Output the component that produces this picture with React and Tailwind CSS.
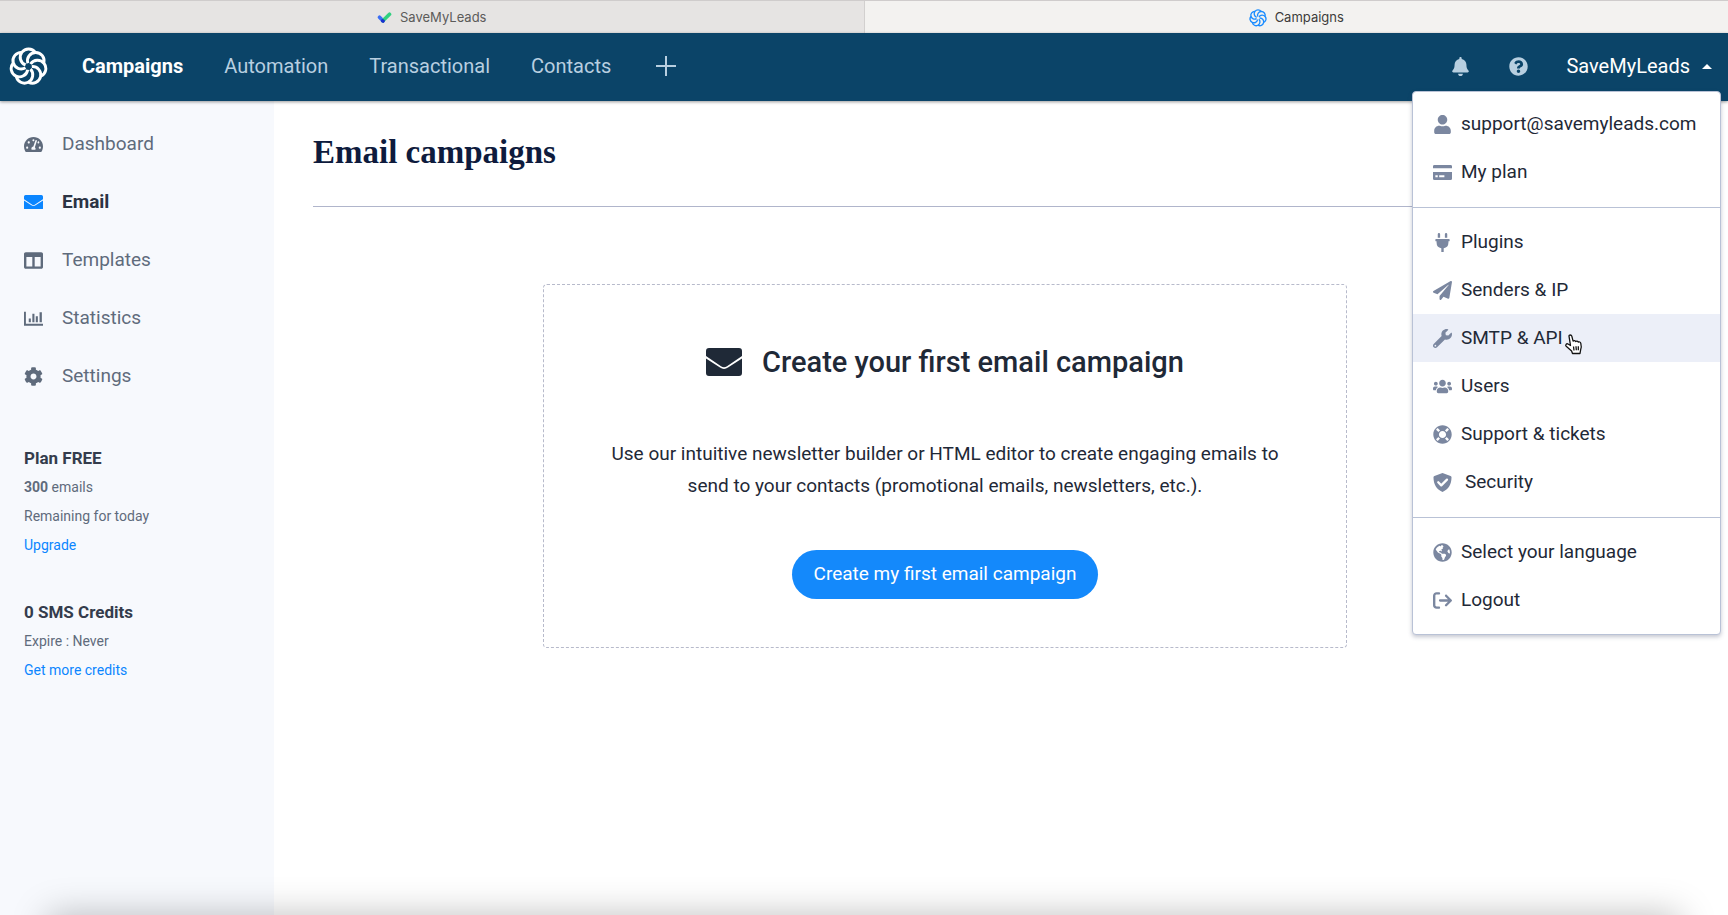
import {
  FaBell,
  FaCog,
  FaColumns,
  FaGlobeAmericas,
  FaLifeRing,
  FaPaperPlane,
  FaPlug,
  FaQuestionCircle,
  FaTachometerAlt,
  FaUser,
  FaUsers,
  FaWrench,
} from "react-icons/fa";
import { FaArrowRightFromBracket } from "react-icons/fa6";

const PETALS = [0, 1, 2, 3, 4, 5, 6];

function PinwheelLogo({ className }) {
  return (
    <svg viewBox="-20 -20 40 40" fill="none" stroke="currentColor" strokeWidth="3" className={className} aria-hidden="true">
      {PETALS.map((n) => (
        <path key={n} d="M6.94 -14.42A8.5 8.5 0 1 0 -3 -1.55" transform={`rotate(${(n * 360) / 7})`} />
      ))}
    </svg>
  );
}

function CheckLogo({ className }) {
  return (
    <svg viewBox="0 0 14 12" fill="none" strokeWidth="3.6" strokeLinecap="round" className={className} aria-hidden="true">
      <path d="M2 5.2L5.2 8.6" stroke="#3b6ef5" />
      <path d="M5.4 8.8L12 2.2" stroke="#2fd07f" />
      <path d="M5.2 8.8L5.6 9" stroke="#1a2fd0" />
    </svg>
  );
}

function EnvelopeIcon({ className }) {
  return (
    <svg viewBox="0 0 36 28" fill="currentColor" className={className} aria-hidden="true">
      <path d="M3 0h30a3 3 0 0 1 3 3v5L21 18.2a5 5 0 0 1-6 0L0 8V3a3 3 0 0 1 3-3z" />
      <path d="M0 10.4l14 9.2a7 7 0 0 0 8 0l14-9.2V25a3 3 0 0 1-3 3H3a3 3 0 0 1-3-3z" />
    </svg>
  );
}

function StatsIcon({ className }) {
  return (
    <svg viewBox="0 0 20 20" fill="currentColor" className={className} aria-hidden="true">
      <path d="M0 3h2v12.5h18v2H0zM5 10h2.2v4H5zM8.8 5H11v9H8.8zM12.4 7.5h2.2V14h-2.2zM16.4 3.5h2.4V14h-2.4z" />
    </svg>
  );
}

function CardIcon({ className }) {
  return (
    <svg viewBox="0 0 20 20" fill="currentColor" className={className} aria-hidden="true">
      <path d="M1.5 2h17A1.5 1.5 0 0 1 20 3.5V5.5H0V3.5A1.5 1.5 0 0 1 1.5 2z" />
      <path fillRule="evenodd" d="M0 9.5h20v7a1.5 1.5 0 0 1-1.5 1.5h-17A1.5 1.5 0 0 1 0 16.5zM2.5 13v2H5v-2zM6.5 13v2H12v-2z" />
    </svg>
  );
}

function ShieldIcon({ className }) {
  return (
    <svg viewBox="0 0 20 20" className={className} aria-hidden="true">
      <path fill="currentColor" d="M10 0l8.5 3.2c.6.2 1 .7 1 1.4C19.4 12 16.5 17.5 10 20 3.5 17.5.6 12 .5 4.6c0-.7.4-1.2 1-1.4z" />
      <path fill="none" stroke="#fff" strokeWidth="2.4" strokeLinecap="round" strokeLinejoin="round" d="M5.5 9.8l3.2 3.2 6-6" />
    </svg>
  );
}

function HandCursor({ className }) {
  return (
    <svg viewBox="0 0 20 21" fill="#fff" stroke="#111" strokeWidth="1.3" strokeLinejoin="round" className={className} aria-hidden="true">
      <path d="M5 2.2C5 .6 7.4.6 7.8 2.2l1.3 5c.6-1 2.3-.8 2.6.3.7-.8 2.2-.5 2.5.6.9-.6 2.4 0 2.6 1.2.5 2 .9 4-.1 6.2L16 19.5H8.5L7.6 17 2.2 12.3C.9 11 2.6 9.2 4 10l2.5 1.5z" />
      <path fill="none" d="M9.5 12.5l.5 4M12 12.3l.3 4M14.3 12.3v4" />
    </svg>
  );
}

const navLinks = ["Automation", "Transactional", "Contacts"];

const sideLinks = [
  { label: "Dashboard", Icon: FaTachometerAlt },
  { label: "Email", Icon: EnvelopeIcon, active: true },
  { label: "Templates", Icon: FaColumns },
  { label: "Statistics", Icon: StatsIcon },
  { label: "Settings", Icon: FaCog },
];

const menuSections = [
  [
    { label: "support@savemyleads.com", Icon: FaUser },
    { label: "My plan", Icon: CardIcon },
  ],
  [
    { label: "Plugins", Icon: FaPlug },
    { label: "Senders & IP", Icon: FaPaperPlane },
    { label: "SMTP & API", Icon: FaWrench, hovered: true },
    { label: "Users", Icon: FaUsers },
    { label: "Support & tickets", Icon: FaLifeRing },
    { label: "Security", Icon: ShieldIcon, indent: true },
  ],
  [
    { label: "Select your language", Icon: FaGlobeAmericas },
    { label: "Logout", Icon: FaArrowRightFromBracket },
  ],
];

function BrowserTabs() {
  return (
    <div role="tablist" className="flex h-[33px] border-t border-[#cfcccc] font-['Inter',sans-serif] text-[13px]">
      <button role="tab" aria-selected="false" className="flex flex-1 items-center justify-center gap-2 border-r border-[#d2d0cf] bg-[#e6e4e3] pt-0.5 text-[#5c5b5a]">
        <CheckLogo className="h-3 w-[15px]" />
        SaveMyLeads
      </button>
      <button role="tab" aria-selected="true" className="flex flex-1 items-center justify-center gap-2 bg-[#f3f2f0] pt-0.5 text-[#3d3c3b]">
        <PinwheelLogo className="size-[18px] text-[#1a8cff]" />
        Campaigns
      </button>
    </div>
  );
}

function AccountMenu() {
  return (
    <div role="menu" className="absolute top-[58px] right-[7px] w-[309px] rounded border border-[#b9c2d6] bg-white shadow-[0_2px_4px_rgba(60,65,100,0.3)]">
      {menuSections.map((items, i) => (
        <div key={i} className="border-b border-[#b9c2d6] pt-2.5 pb-[11px] first:pt-2 last:border-b-0 last:pb-2.5">
          {items.map(({ label, Icon, hovered, indent }) => (
            <a
              key={label}
              href="#"
              role="menuitem"
              className={`relative flex h-12 items-center gap-[9px] px-5 text-[19px] text-[#1f2937] ${hovered ? "bg-[#eceff8]" : ""}`}
            >
              <Icon className="size-[19px] shrink-0 text-[#7b87a0]" />
              <span className={indent ? "pl-1" : ""}>{label}</span>
              {hovered && <HandCursor className="absolute top-5 left-[151px] h-[21px] w-5" />}
            </a>
          ))}
        </div>
      ))}
    </div>
  );
}

function TopNav() {
  return (
    <header className="relative z-10 flex h-[68px] items-center bg-[#0b4468] pr-4 pb-0.5 pl-[9px] text-xl text-[#b8cfe0] shadow-[0_1px_3px_rgba(0,0,0,0.4)]">
      <a href="#" aria-label="Home" className="mr-[34px] text-white">
        <PinwheelLogo className="size-[39px]" />
      </a>
      <nav className="flex items-center gap-[41px]">
        <a href="#" className="font-bold text-white">Campaigns</a>
        {navLinks.map((label) => (
          <a key={label} href="#">{label}</a>
        ))}
        <button aria-label="Create" className="ml-1">
          <svg viewBox="0 0 20 20" stroke="currentColor" strokeWidth="2" className="size-5" aria-hidden="true">
            <path d="M10 0v20M0 10h20" />
          </svg>
        </button>
      </nav>
      <div className="ml-auto flex items-center">
        <button aria-label="Notifications" className="mr-[39px]">
          <FaBell className="size-[19px]" />
        </button>
        <button aria-label="Help" className="mr-[38px]">
          <FaQuestionCircle className="size-[19px]" />
        </button>
        <button aria-haspopup="menu" aria-expanded="true" className="flex items-center gap-3 text-white">
          SaveMyLeads
          <svg viewBox="0 0 10 5" fill="currentColor" className="h-[5px] w-2.5" aria-hidden="true">
            <path d="M5 0l5 5H0z" />
          </svg>
        </button>
      </div>
      <AccountMenu />
    </header>
  );
}

function Sidebar() {
  return (
    <aside className="w-[274px] shrink-0 bg-[#f7f9fd] px-6 pt-[14px] text-[#5f6b7c]">
      <nav>
        {sideLinks.map(({ label, Icon, active }) => (
          <a
            key={label}
            href="#"
            className={`flex h-[58px] items-center gap-[19px] text-[19px] ${active ? "font-bold text-[#2c3444]" : ""}`}
          >
            <Icon className={`w-[19px] shrink-0 ${active ? "text-[#0b86ff]" : ""}`} />
            {label}
          </a>
        ))}
      </nav>
      <section className="mt-[39px] text-sm leading-[29px]">
        <h2 className="text-[17px] leading-[29px] font-bold text-[#343c4c]">Plan FREE</h2>
        <p><strong>300</strong> emails</p>
        <p>Remaining for today</p>
        <a href="#" className="text-[#0b86ff]">Upgrade</a>
      </section>
      <section className="mt-[38px] text-sm leading-[29px]">
        <h2 className="text-[17px] leading-[29px] font-bold text-[#343c4c]">0 SMS Credits</h2>
        <p>Expire : Never</p>
        <a href="#" className="text-[#0b86ff]">Get more credits</a>
      </section>
    </aside>
  );
}

function App() {
  return (
    <div className="flex min-h-screen flex-col bg-white font-['Roboto',sans-serif]">
      <BrowserTabs />
      <TopNav />
      <div className="flex flex-1">
        <Sidebar />
        <main className="flex-1 px-[39px] pt-[31px]">
          <div className="max-w-[1264px]">
            <h1 className="border-b border-[#b0b5cb] pb-[34px] font-['Liberation_Serif',serif] text-[33px] leading-10 font-bold text-[#0e1b3d]">
              Email campaigns
            </h1>
            <section className="mx-auto mt-[77px] flex max-w-[804px] flex-col items-center rounded border border-dashed border-[#b7bacb] px-14 pt-[59px] pb-12 text-[#1f2937]">
              <h2 className="flex items-center gap-5 text-[29px] leading-9 font-medium">
                <EnvelopeIcon className="h-7 w-9" />
                Create your first email campaign
              </h2>
              <p className="mt-[58px] text-center text-[19px] leading-8">
                Use our intuitive newsletter builder or HTML editor to create engaging emails to
                <br />
                send to your contacts (promotional emails, newsletters, etc.).
              </p>
              <button className="mt-12 h-[49px] rounded-full bg-[#1489fb] px-[22px] text-[19px] text-white">
                Create my first email campaign
              </button>
            </section>
          </div>
        </main>
      </div>
      {/* soft shadow rising from the bottom edge of the window */}
      <div className="pointer-events-none fixed inset-x-12 top-full h-10 shadow-[0_0_36px_rgba(0,0,0,0.26)]" />
    </div>
  );
}

export default App;
